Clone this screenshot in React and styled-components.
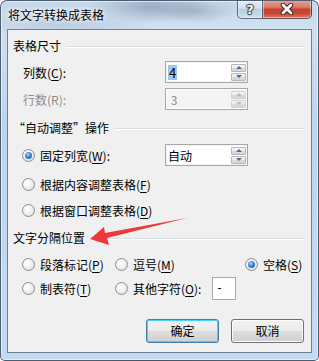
import styled, { createGlobalStyle } from 'styled-components';

const GlobalStyle = createGlobalStyle`
  html, body {
    margin: 0;
    padding: 0;
    background: #ffffff;
  }
  body {
    font-family: "Noto Sans CJK SC", "Microsoft YaHei", sans-serif;
    font-size: 12px;
    color: #000;
  }
  u {
    text-decoration-thickness: 1px;
    text-underline-offset: 2px;
  }
`;

const Window = styled.div`
  position: relative;
  width: 319px;
  height: 361px;
  box-sizing: border-box;
  display: flex;
  flex-direction: column;
  border: 1px solid rgba(38, 52, 68, 0.75);
  border-radius: 7px 7px 5px 5px;
  background:
    radial-gradient(ellipse 60px 16px at 150px 6px, rgba(120, 138, 160, 0.55), transparent),
    radial-gradient(ellipse 40px 12px at 195px 10px, rgba(130, 145, 165, 0.45), transparent),
    radial-gradient(ellipse 90px 14px at 60px 24px, rgba(150, 170, 195, 0.35), transparent),
    linear-gradient(180deg, #c2d6ea 0, #cfe0f1 26px, #bcd5ee 120px, #c3daf1 100%);
  box-shadow: inset 0 0 0 1px rgba(255, 255, 255, 0.55);
  overflow: hidden;
`;

const TitleBar = styled.div`
  height: 28px;
  display: flex;
  align-items: flex-start;
`;

const Title = styled.div`
  flex: 1;
  padding: 6px 0 0 7px;
  line-height: 16px;
  font-size: 12px;
  color: #000;
  text-shadow: 0 0 6px rgba(255, 255, 255, 0.95), 0 0 3px rgba(255, 255, 255, 0.9);
`;

const CaptionButtons = styled.div`
  display: flex;
  margin-right: 6px;
  margin-top: -1px;
`;

const CaptionButton = styled.div`
  height: 19px;
  width: ${(p) => p.$w}px;
  box-sizing: border-box;
  display: flex;
  align-items: center;
  justify-content: center;
  border: 1px solid rgba(40, 50, 64, 0.7);
  border-top: none;
  border-left: ${(p) => (p.$close ? 'none' : '1px solid rgba(40, 50, 64, 0.7)')};
  border-radius: ${(p) => (p.$close ? '0 0 5px 0' : '0 0 0 5px')};
  background: ${(p) =>
    p.$close
      ? 'linear-gradient(180deg, #e6a598 0, #d87a6b 40%, #c4412f 52%, #c94834 75%, #e07a5c 100%)'
      : 'linear-gradient(180deg, rgba(255,255,255,0.55) 0, rgba(225,235,245,0.45) 45%, rgba(170,190,212,0.45) 52%, rgba(205,222,240,0.55) 100%)'};
  box-shadow: inset 0 0 0 1px rgba(255, 255, 255, 0.45);
`;

const HelpGlyph = styled.span`
  font-family: "DejaVu Sans", sans-serif;
  font-weight: bold;
  font-size: 13px;
  line-height: 1;
  color: #fff;
  text-shadow: 0 0 1px #233, 1px 0 1px #334, -1px 0 1px #334, 0 1px 1px #334, 0 -1px 1px #334;
`;

const Client = styled.div`
  position: relative;
  flex: 1;
  margin: 0 6px 7px 6px;
  border: 1px solid #6f8296;
  background: #f0f0f0;
  display: flex;
  flex-direction: column;
  padding: 0 6px 0 5px;
`;

const GroupHeader = styled.div`
  display: flex;
  align-items: center;
  height: 16px;
  margin-top: ${(p) => p.$mt}px;
  line-height: 16px;
  &::after {
    content: '';
    flex: 1;
    height: 1px;
    background: #d5dfe5;
    margin-left: 5px;
    box-shadow: 0 1px 0 #ffffff;
  }
`;

const FieldRow = styled.div`
  display: flex;
  align-items: center;
  height: ${(p) => p.$h || 22}px;
  margin-top: ${(p) => p.$mt}px;
  padding-left: 10px;
`;

const FieldLabel = styled.div`
  width: 142px;
  color: ${(p) => (p.$disabled ? '#8d8d8d' : '#000')};
`;

const SpinBox = styled.div`
  width: 83px;
  height: 22px;
  box-sizing: border-box;
  border: 1px solid #a8a8a8;
  background: ${(p) => (p.$disabled ? '#f4f4f4' : '#ffffff')};
  display: flex;
  align-items: center;
  padding: 1px 1px 1px 2px;
  box-shadow: inset 0 0 0 1px ${(p) => (p.$disabled ? '#ffffff' : '#f4f4f4')};
`;

const SpinValue = styled.div`
  flex: 1;
  display: flex;
  align-items: center;
  font-size: 12px;
  color: ${(p) => (p.$disabled ? '#8d8d8d' : '#000')};
`;

const Selected = styled.span`
  background: #9fc5ef;
  padding: 0 1px;
  line-height: 15px;
  font-size: 13px;
`;

const SpinButtons = styled.div`
  display: flex;
  flex-direction: column;
  gap: 1px;
  width: 15px;
`;

const SpinButton = styled.div`
  height: 8px;
  box-sizing: border-box;
  border: 1px solid ${(p) => (p.$disabled ? '#d4d4d4' : '#b7b7b7')};
  border-radius: 1px;
  background: linear-gradient(180deg, #f6f6f6 0, #e9e9e9 50%, #dcdcdc 51%, #d6d6d6 100%);
  display: flex;
  align-items: center;
  justify-content: center;
  &::before {
    content: '';
    width: 0;
    height: 0;
    border-left: 3px solid transparent;
    border-right: 3px solid transparent;
    ${(p) => (p.$down ? 'border-top' : 'border-bottom')}: 3px solid
      ${(p) => (p.$disabled ? '#b9b9b9' : '#4d6a9c')};
  }
`;

const RadioRow = styled.div`
  display: flex;
  align-items: center;
  height: ${(p) => p.$h || 20}px;
  margin-top: ${(p) => p.$mt}px;
  padding-left: 9px;
`;

const RadioItem = styled.div`
  display: flex;
  align-items: center;
  width: ${(p) => (p.$w ? `${p.$w}px` : 'auto')};
  flex-shrink: 0;
`;

const RadioCircle = styled.span`
  width: 13px;
  height: 13px;
  box-sizing: border-box;
  border-radius: 50%;
  border: 1px solid #8b8e93;
  background: radial-gradient(circle at 40% 35%, #ffffff 0, #f2f2f2 40%, #d9d9d9 100%);
  display: flex;
  align-items: center;
  justify-content: center;
  margin-right: 5px;
  flex-shrink: 0;
  &::after {
    content: '';
    display: ${(p) => (p.$checked ? 'block' : 'none')};
    width: 7px;
    height: 7px;
    border-radius: 50%;
    background: radial-gradient(circle at 40% 35%, #9fd4ff 0, #3a8ad4 45%, #1b4f86 100%);
  }
`;

const SepGrid = styled.div`
  display: grid;
  grid-template-columns: 93px 130px auto;
  margin-top: ${(p) => p.$mt}px;
  height: ${(p) => p.$h}px;
  align-items: center;
  padding-left: 9px;
`;

const OtherField = styled.div`
  display: flex;
  align-items: center;
`;

const SmallInput = styled.div`
  width: 24px;
  height: 23px;
  box-sizing: border-box;
  border: 1px solid #a8a8a8;
  background: #fff;
  margin-left: 11px;
  padding-left: 4px;
  line-height: 20px;
  font-family: "Liberation Sans", sans-serif;
`;

const ButtonRow = styled.div`
  display: flex;
  justify-content: flex-end;
  gap: 12px;
  margin-top: 19px;
  padding-right: 1px;
`;

const Button = styled.div`
  width: 73px;
  height: 24px;
  box-sizing: border-box;
  border-radius: 3px;
  border: 1px solid ${(p) => (p.$default ? '#3c7fb1' : '#707070')};
  background: linear-gradient(180deg, #f2f2f2 0, #ebebeb 48%, #dddddd 52%, #cfcfcf 100%);
  box-shadow: inset 0 0 0 1px ${(p) => (p.$default ? '#48d1ff' : '#fcfcfc')};
  display: flex;
  align-items: center;
  justify-content: center;
  line-height: 16px;
`;

const Arrow = styled.svg`
  position: absolute;
  left: 0;
  top: 0;
  pointer-events: none;
`;

export default function App() {
  return (
    <>
      <GlobalStyle />
      <Window>
        <TitleBar>
          <Title>将文字转换成表格</Title>
          <CaptionButtons>
            <CaptionButton $w={26}>
              <HelpGlyph>?</HelpGlyph>
            </CaptionButton>
            <CaptionButton $w={49} $close>
              <svg width="14" height="12" viewBox="0 0 14 12">
                <path d="M3 2 L11 10 M11 2 L3 10" stroke="#3a2020" strokeWidth="4.6" strokeLinecap="round" />
                <path d="M3 2 L11 10 M11 2 L3 10" stroke="#ffffff" strokeWidth="2.8" strokeLinecap="round" />
              </svg>
            </CaptionButton>
          </CaptionButtons>
        </TitleBar>
        <Client>
          <GroupHeader $mt={8}>表格尺寸</GroupHeader>
          <FieldRow $mt={7}>
            <FieldLabel>
              列数(<u>C</u>):
            </FieldLabel>
            <SpinBox>
              <SpinValue>
                <Selected>4</Selected>
              </SpinValue>
              <SpinButtons>
                <SpinButton />
                <SpinButton $down />
              </SpinButtons>
            </SpinBox>
          </FieldRow>
          <FieldRow $mt={5}>
            <FieldLabel $disabled>行数(R):</FieldLabel>
            <SpinBox $disabled>
              <SpinValue $disabled>&nbsp;3</SpinValue>
              <SpinButtons>
                <SpinButton $disabled />
                <SpinButton $disabled $down />
              </SpinButtons>
            </SpinBox>
          </FieldRow>

          <GroupHeader $mt={10}>“自动调整”操作</GroupHeader>
          <RadioRow $mt={8} $h={22}>
            <RadioItem $w={143}>
              <RadioCircle $checked />
              固定列宽(<u>W</u>):
            </RadioItem>
            <SpinBox>
              <SpinValue>自动</SpinValue>
              <SpinButtons>
                <SpinButton />
                <SpinButton $down />
              </SpinButtons>
            </SpinBox>
          </RadioRow>
          <RadioRow $mt={8}>
            <RadioItem>
              <RadioCircle />
              根据内容调整表格(<u>F</u>)
            </RadioItem>
          </RadioRow>
          <RadioRow $mt={6}>
            <RadioItem>
              <RadioCircle />
              根据窗口调整表格(<u>D</u>)
            </RadioItem>
          </RadioRow>

          <GroupHeader $mt={10}>文字分隔位置</GroupHeader>
          <SepGrid $mt={8} $h={20}>
            <RadioItem>
              <RadioCircle />
              段落标记(<u>P</u>)
            </RadioItem>
            <RadioItem>
              <RadioCircle />
              逗号(<u>M</u>)
            </RadioItem>
            <RadioItem>
              <RadioCircle $checked />
              空格(<u>S</u>)
            </RadioItem>
          </SepGrid>
          <SepGrid $mt={3} $h={23}>
            <RadioItem>
              <RadioCircle />
              制表符(<u>T</u>)
            </RadioItem>
            <OtherField>
              <RadioCircle />
              其他字符(<u>O</u>):
              <SmallInput>-</SmallInput>
            </OtherField>
          </SepGrid>

          <ButtonRow>
            <Button $default>确定</Button>
            <Button>取消</Button>
          </ButtonRow>
        </Client>
        <Arrow width="319" height="361" viewBox="0 0 319 361">
          <polygon
            points="89,238 103,226 104,232 186,217 106,237 108,244"
            fill="#ec3a3a"
          />
        </Arrow>
      </Window>
    </>
  );
}
